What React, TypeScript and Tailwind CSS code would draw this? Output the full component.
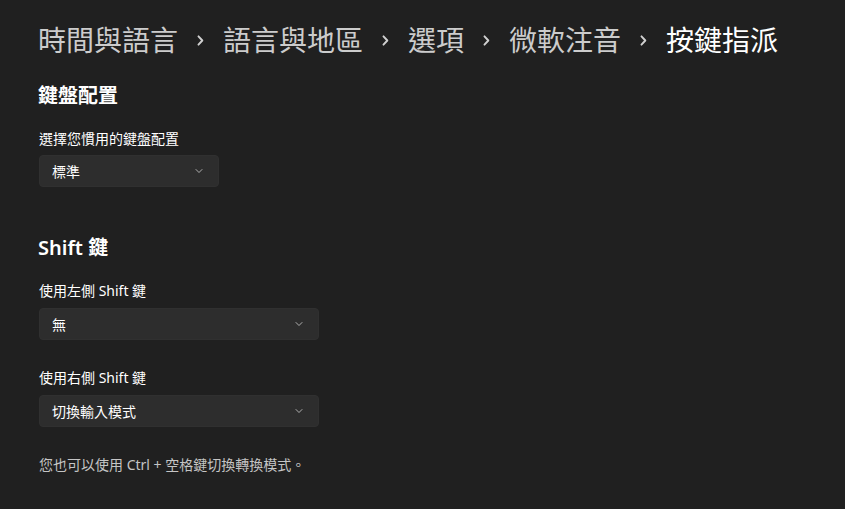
import { ChevronDown } from 'lucide-react';

const CRUMBS = ['時間與語言', '語言與地區', '選項', '微軟注音', '按鍵指派'];

const FONT = { fontFamily: '"Noto Sans", "Noto Sans CJK TC", sans-serif' };

function Crumb({ label, last }: { label: string; last: boolean }) {
  return (
    <div className="flex items-center">
      <span className={last ? 'text-white' : 'text-[#cccccc]'}>{label}</span>
      {!last && (
        <svg viewBox="0 0 9 12" className="mx-[18px] h-[11px] w-[9px]" fill="none">
          <path d="M2.3 1.5 L6.5 6 L2.3 10.5" stroke="#d0d0d0" strokeWidth="2.1" strokeLinecap="round" strokeLinejoin="round" />
        </svg>
      )}
    </div>
  );
}

function Select({ value, width }: { value: string; width: string }) {
  return (
    <div
      className={`flex h-[32px] items-center justify-between rounded-[4px] border border-[#303030] bg-[#2d2d2d] pl-[12px] pr-[13px] text-[14px] text-white ${width}`}
    >
      <span>{value}</span>
      <ChevronDown className="h-[12px] w-[12px] text-[#cfcfcf]" strokeWidth={1.6} />
    </div>
  );
}

export default function App() {
  return (
    <div className="h-[509px] w-[845px] overflow-hidden bg-[#202020] px-[38px] pt-[21px]" style={FONT}>
      <div className="flex items-center text-[28px] leading-[38px]">
        {CRUMBS.map((c, i) => (
          <Crumb key={c} label={c} last={i === CRUMBS.length - 1} />
        ))}
      </div>

      {/* Keyboard layout */}
      <h2 className="mt-[23px] text-[20px] font-semibold leading-[28px] text-white">鍵盤配置</h2>
      <p className="ml-[1px] mt-[19px] text-[14px] leading-[20px] text-white">選擇您慣用的鍵盤配置</p>
      <div className="ml-[1px] mt-[6px]">
        <Select value="標準" width="w-[180px]" />
      </div>

      {/* Shift keys */}
      <h2 className="mt-[47px] text-[20px] font-semibold leading-[28px] text-white">Shift 鍵</h2>
      <p className="ml-[1px] mt-[19px] text-[14px] leading-[20px] text-white">使用左側 Shift 鍵</p>
      <div className="ml-[1px] mt-[7px]">
        <Select value="無" width="w-[280px]" />
      </div>
      <p className="ml-[1px] mt-[28px] text-[14px] leading-[20px] text-white">使用右側 Shift 鍵</p>
      <div className="ml-[1px] mt-[7px]">
        <Select value="切換輸入模式" width="w-[280px]" />
      </div>

      <p className="ml-[1px] mt-[28px] text-[14px] leading-[20px] text-[#c5c5c5]">
        您也可以使用 Ctrl + 空格鍵切換轉換模式。
      </p>
    </div>
  );
}
